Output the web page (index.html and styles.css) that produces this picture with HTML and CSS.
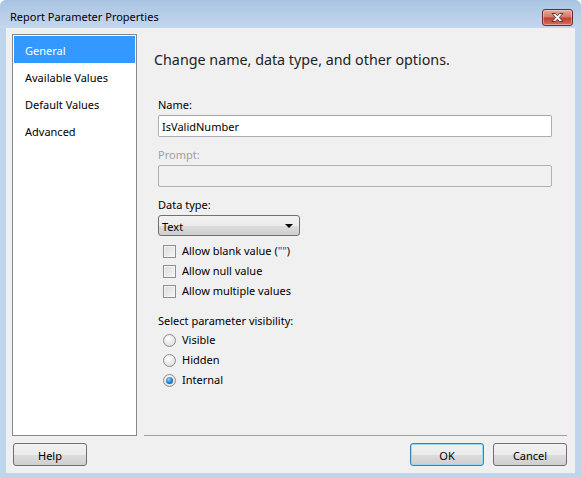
FILE: index.html
```html
<!DOCTYPE html>
<html lang="en">
<head>
  <meta charset="UTF-8">
  <title>Report Parameter Properties</title>
  <link rel="stylesheet" href="styles.css">
</head>
<body>
  <div class="window">
    <!-- title bar -->
    <div class="titlebar">
      <span class="title">Report Parameter Properties</span>
      <div class="close-btn">
        <svg width="15" height="11" viewBox="0 0 15 11">
          <path d="M2 1.5 L5.5 1.5 L7.5 3.8 L9.5 1.5 L13 1.5 L9.3 5.5 L13 9.5 L9.5 9.5 L7.5 7.2 L5.5 9.5 L2 9.5 L5.7 5.5 Z" fill="#ffffff" stroke="#5a3b3b" stroke-width="1" stroke-linejoin="round"/>
        </svg>
      </div>
    </div>

    <div class="client">
      <div class="top">
        <div class="nav">
          <div class="nav-item active">General</div>
          <div class="nav-item">Available Values</div>
          <div class="nav-item">Default Values</div>
          <div class="nav-item">Advanced</div>
        </div>

        <div class="main">
          <h2 class="heading">Change name, data type, and other options.</h2>

          <div class="label">Name:</div>
          <div class="textbox">IsValidNumber</div>

          <div class="label disabled">Prompt:</div>
          <div class="textbox off"></div>

          <div class="label">Data type:</div>
          <div class="select">
            <span>Text</span>
            <span class="arrow"></span>
          </div>

          <div class="checks">
            <div class="row"><span class="checkbox"></span>Allow blank value (<span class="quote">""</span>)</div>
            <div class="row"><span class="checkbox"></span>Allow null value</div>
            <div class="row"><span class="checkbox"></span>Allow multiple values</div>
          </div>

          <div class="label visibility">Select parameter visibility:</div>
          <div class="radios">
            <div class="row"><span class="radio"></span>Visible</div>
            <div class="row"><span class="radio"></span>Hidden</div>
            <div class="row"><span class="radio on"></span>Internal</div>
          </div>
        </div>
      </div>

      <div class="footer">
        <button class="btn">Help</button>
        <div class="right-buttons">
          <button class="btn default">OK</button>
          <button class="btn">Cancel</button>
        </div>
      </div>
    </div>
  </div>
</body>
</html>
```

FILE: styles.css
```css
body {
  margin: 0;
  padding: 0;
  font-family: 'Noto Sans', 'Open Sans', sans-serif;
  font-size: 11px;
  color: #000;
  background: #ffffff;
}
.window {
  width: 581px;
  height: 478px;
  background: #bfd5ec;
  border-radius: 6px 6px 0 0;
  overflow: hidden;
  box-sizing: border-box;
  display: flex;
  flex-direction: column;
}
.titlebar {
  height: 29px;
  box-sizing: border-box;
  display: flex;
  align-items: flex-start;
  justify-content: space-between;
  padding: 0 8px 0 10px;
  background: linear-gradient(to bottom, #a8c3e1 0%, #b6cde8 45%, #c3d7ee 100%);
}
.title {
  font-size: 11px;
  line-height: 16px;
  padding-top: 9px;
  color: #000;
}
.close-btn {
  width: 29px;
  height: 15px;
  border: 1px solid #6b2c2c;
  border-radius: 3px;
  background: linear-gradient(to bottom, #e8a79c 0%, #d4796c 45%, #c2402f 55%, #d0705c 100%);
  display: flex;
  align-items: center;
  justify-content: center;
  margin-top: 9px;
  box-shadow: inset 0 0 0 1px rgba(255,255,255,0.35);
}
.client {
  flex: 1;
  margin: 0 6px 5px 6px;
  background: #f0f0f0;
  padding: 6px 8px 7px 6px;
  display: flex;
  flex-direction: column;
}
.top {
  display: flex;
  height: 402px;
}
.nav {
  width: 125px;
  box-sizing: border-box;
  border: 1px solid #828790;
  background: #fff;
  padding: 1px;
}
.nav-item {
  height: 27px;
  box-sizing: border-box;
  line-height: 25px;
  padding: 2px 0 0 11px;
}
.nav-item.active {
  background: #3399ff;
  color: #fff;
}
.main {
  flex: 1;
  margin-left: 7px;
  border-bottom: 1px solid #a0a0a0;
  padding-left: 14px;
  box-sizing: border-box;
}
.heading {
  font-size: 14.3px;
  font-weight: normal;
  color: #1e1e1e;
  margin: 16px 0 0 -4px;
  line-height: 20px;
}
.label {
  line-height: 16px;
  padding-top: 2px;
  margin-top: 8px;
  margin-bottom: 2px;
}
.heading + .label {
  margin-top: 25px;
}
.label.disabled {
  color: #a0a0a0;
}
.label.visibility {
  margin-top: 11px;
  margin-bottom: 0;
}
.textbox {
  width: 394px;
  height: 22px;
  box-sizing: border-box;
  border: 1px solid #abadb3;
  border-top-color: #a3a5aa;
  border-radius: 2px;
  background: #fff;
  line-height: 21px;
  padding-left: 3px;
}
.textbox.off {
  background: #f0f0f0;
  border-color: #adb2b5;
}
.select {
  width: 142px;
  height: 21px;
  box-sizing: border-box;
  border: 1px solid #707070;
  border-radius: 3px;
  background: linear-gradient(to bottom, #f2f2f2 0%, #ebebeb 50%, #dddddd 51%, #cfcfcf 100%);
  display: flex;
  align-items: center;
  justify-content: space-between;
  padding: 1px 6px 0 3px;
}
.arrow {
  width: 0;
  height: 0;
  border-left: 4px solid transparent;
  border-right: 4px solid transparent;
  border-top: 4px solid #000;
}
.checks {
  margin-top: 4px;
}
.row {
  height: 20px;
  display: flex;
  align-items: center;
  padding-left: 5px;
}
.row-text {
  padding-top: 1px;
}
.checkbox {
  width: 13px;
  height: 13px;
  box-sizing: border-box;
  border: 1px solid #8e8f8f;
  background: linear-gradient(135deg, #dcdcdc 0%, #f4f4f4 100%);
  box-shadow: inset 0 0 0 1px #f4f4f4;
  margin-right: 6px;
}
.quote {
  color: #1a3fc0;
}
.radio {
  width: 13px;
  height: 13px;
  box-sizing: border-box;
  border-radius: 50%;
  border: 1px solid #8e8f8f;
  background: radial-gradient(circle at 40% 35%, #ffffff 0%, #e6e6e6 60%, #cfcfcf 100%);
  margin-right: 6px;
  position: relative;
}
.radio.on::after {
  content: "";
  position: absolute;
  left: 2px;
  top: 2px;
  width: 7px;
  height: 7px;
  border-radius: 50%;
  background: radial-gradient(circle at 40% 35%, #8fd6ff 0%, #1e7ad1 55%, #0b3d75 100%);
}
.radios .row,
.checks .row {
  line-height: 20px;
  padding-top: 2px;
  box-sizing: border-box;
}
.footer {
  display: flex;
  justify-content: space-between;
  margin-top: 7px;
  padding-left: 1px;
}
.right-buttons {
  display: flex;
  gap: 9px;
}
.btn {
  width: 74px;
  height: 23px;
  border: 1px solid #707070;
  border-radius: 3px;
  background: linear-gradient(to bottom, #f2f2f2 0%, #ebebeb 50%, #dddddd 51%, #cfcfcf 100%);
  font-family: 'Noto Sans', 'Open Sans', sans-serif;
  font-size: 11px;
  color: #000;
  padding: 2px 0 0 0;
}
.btn.default {
  border-color: #3c7fb1;
  box-shadow: inset 0 0 0 1px #9ad8f4;
}
```
